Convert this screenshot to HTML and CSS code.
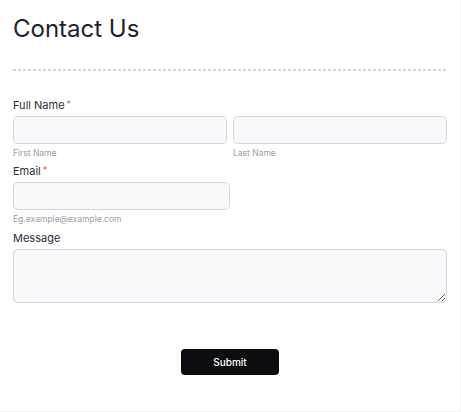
FILE: index.html
```html
<!DOCTYPE html>
<html lang="en">
<head>
    <meta charset="UTF-8">
    <meta name="viewport" content="width=device-width, initial-scale=1.0">
    <title>Contact Us</title>
    <link rel="stylesheet" href="styles.css">
</head>
<body>
    <div class="card">
        <h1>Contact Us</h1>
        <div class="divider"></div>

        <form class="contact-form" onsubmit="return false;">
            <div class="field name-field">
                <label>Full Name<span class="req">*</span></label>
                <div class="row">
                    <div class="col">
                        <input type="text" id="first-name">
                        <span class="hint">First Name</span>
                    </div>
                    <div class="col">
                        <input type="text" id="last-name">
                        <span class="hint">Last Name</span>
                    </div>
                </div>
            </div>

            <div class="field email-field">
                <label for="email">Email<span class="req">*</span></label>
                <div class="col half">
                    <input type="email" id="email">
                    <span class="hint">Eg.example@example.com</span>
                </div>
            </div>

            <div class="field">
                <label for="message">Message</label>
                <textarea id="message"></textarea>
            </div>

            <div class="actions">
                <button type="submit" class="btn">Submit</button>
            </div>
        </form>
    </div>
</body>
</html>
```

FILE: styles.css
```css
body {
    margin: 0;
    font-family: 'Inter', 'Noto Sans', sans-serif;
    background: #f3f4f6;
    color: #1f2533;
}
.card {
    width: 460px;
    height: 411px;
    box-sizing: border-box;
    padding: 14px 13px 0;
    background: #fff;
}
h1 {
    margin: 0;
    font-size: 24px;
    font-weight: 400;
    line-height: 29px;
    color: #1c2230;
}
.divider {
    margin-top: 26px;
    height: 2px;
    background: repeating-linear-gradient(to right, #d3d5da 0 3px, transparent 3px 5px);
}

.contact-form { margin-top: 25px; }
.field { display: flex; flex-direction: column; margin-bottom: 4px; }
.name-field { margin-bottom: 3px; }
.email-field { margin-bottom: 6px; }
.field label {
    font-size: 11px;
    line-height: 15px;
    color: #2a2f3a;
    margin-bottom: 3px;
}
.req { color: #e4572e; font-size: 9px; margin-left: 2px; vertical-align: 2px; }
.row { display: flex; gap: 6px; }
.col { flex: 1; display: flex; flex-direction: column; }
.half { width: 217px; flex: none; }

input, textarea {
    box-sizing: border-box;
    height: 28px;
    width: 100%;
    border: 1px solid #d1d5db;
    border-radius: 5px;
    background: #f8f9fb;
    font-family: inherit;
    margin: 0;
}
textarea { height: 54px; resize: vertical; display: block; }
.hint {
    font-size: 8.5px;
    line-height: 12px;
    color: #9aa0aa;
    margin-top: 3px;
}

.actions { display: flex; justify-content: center; margin-top: 46px; }
.btn {
    width: 98px;
    height: 26px;
    background: #0b0d10;
    color: #fff;
    border: none;
    border-radius: 4px;
    font-family: 'Inter', sans-serif;
    font-size: 10px;
    font-weight: 500;
    cursor: pointer;
}
```
